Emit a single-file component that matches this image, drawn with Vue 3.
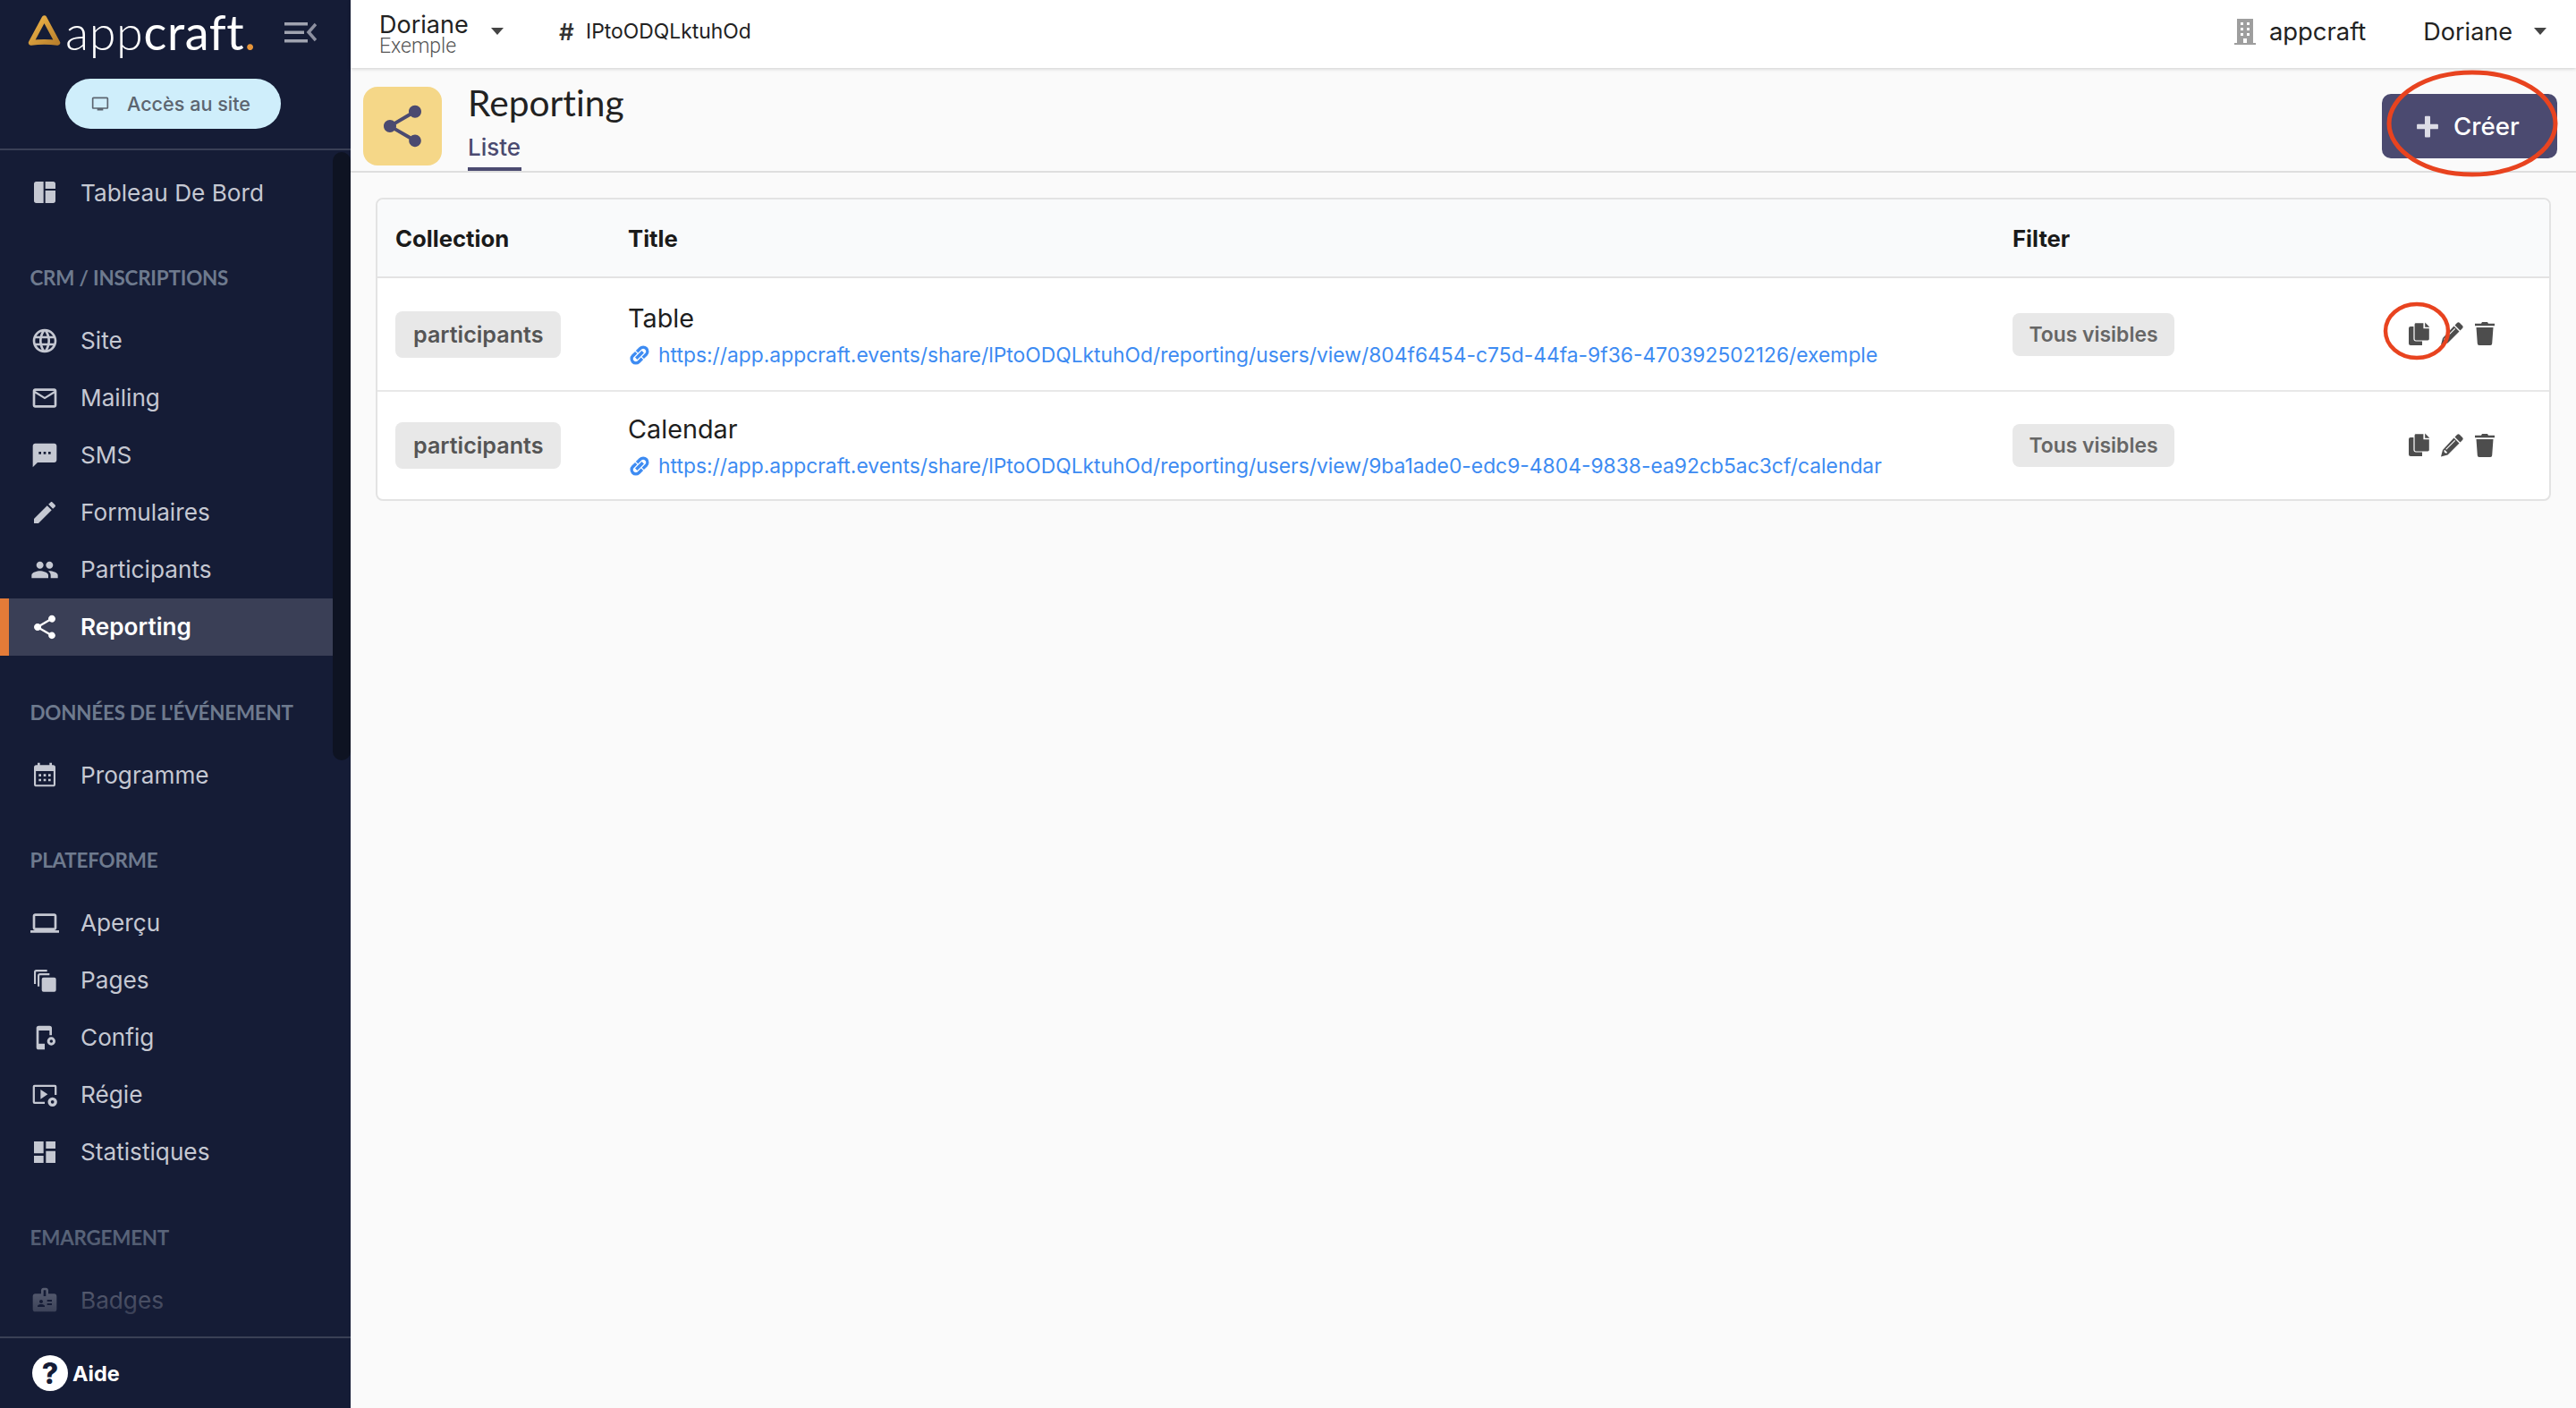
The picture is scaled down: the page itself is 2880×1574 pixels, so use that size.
<script setup>
const I = {
  dash: 'M3 5a2 2 0 0 1 2-2h6v18H5a2 2 0 0 1-2-2zM12.5 3H19a2 2 0 0 1 2 2v4h-8.5zM12.5 10.5H21V19a2 2 0 0 1-2 2h-6.5z',
  globe: 'M11.99 2C6.47 2 2 6.48 2 12s4.47 10 9.99 10C17.52 22 22 17.52 22 12S17.52 2 11.99 2zm6.93 6h-2.95c-.32-1.25-.78-2.45-1.38-3.56 1.84.63 3.37 1.91 4.33 3.56zM12 4.04c.83 1.2 1.48 2.53 1.91 3.96h-3.82c.43-1.43 1.08-2.76 1.91-3.96zM4.26 14C4.1 13.36 4 12.69 4 12s.1-1.36.26-2h3.38c-.08.66-.14 1.32-.14 2 0 .68.06 1.34.14 2H4.26zm.82 2h2.95c.32 1.25.78 2.45 1.38 3.56-1.84-.63-3.37-1.9-4.33-3.56zm2.95-8H5.08c.96-1.66 2.49-2.93 4.33-3.56C8.81 5.55 8.35 6.75 8.03 8zM12 19.96c-.83-1.2-1.48-2.53-1.91-3.96h3.82c-.43 1.43-1.08 2.76-1.91 3.96zM14.34 14H9.66c-.09-.66-.16-1.32-.16-2 0-.68.07-1.35.16-2h4.68c.09.65.16 1.32.16 2 0 .68-.07 1.34-.16 2zm.25 5.56c.6-1.11 1.06-2.31 1.38-3.56h2.95c-.96 1.65-2.49 2.93-4.33 3.56zM16.36 14c.08-.66.14-1.32.14-2 0-.68-.06-1.34-.14-2h3.38c.16.64.26 1.31.26 2s-.1 1.36-.26 2h-3.38z',
  mail: 'M20 4H4c-1.1 0-1.99.9-1.99 2L2 18c0 1.1.9 2 2 2h16c1.1 0 2-.9 2-2V6c0-1.1-.9-2-2-2zm0 14H4V8l8 5 8-5v10zm-8-7L4 6h16l-8 5z',
  sms: 'M20 2H4c-1.1 0-1.99.9-1.99 2L2 22l4-4h14c1.1 0 2-.9 2-2V4c0-1.1-.9-2-2-2zM9 11H7V9h2v2zm4 0h-2V9h2v2zm4 0h-2V9h2v2z',
  edit: 'M3 17.25V21h3.75L17.81 9.94l-3.75-3.75L3 17.25zM20.71 7.04c.39-.39.39-1.02 0-1.41l-2.34-2.34c-.39-.39-1.02-.39-1.41 0l-1.83 1.83 3.75 3.75 1.83-1.83z',
  people: 'M16 11c1.66 0 2.99-1.34 2.99-3S17.66 5 16 5c-1.66 0-3 1.34-3 3s1.34 3 3 3zm-8 0c1.66 0 2.99-1.34 2.99-3S9.66 5 8 5C6.34 5 5 6.34 5 8s1.34 3 3 3zm0 2c-2.33 0-7 1.17-7 3.5V19h14v-2.5c0-2.33-4.67-3.5-7-3.5zm8 0c-.29 0-.62.02-.97.05 1.16.84 1.97 1.97 1.97 3.45V19h6v-2.5c0-2.33-4.67-3.5-7-3.5z',
  share: 'M18 16.08c-.76 0-1.44.3-1.96.77L8.91 12.7c.05-.23.09-.46.09-.7s-.04-.47-.09-.7l7.05-4.11c.54.5 1.25.81 2.04.81 1.66 0 3-1.34 3-3s-1.34-3-3-3-3 1.34-3 3c0 .24.04.47.09.7L8.04 9.81C7.5 9.31 6.79 9 6 9c-1.66 0-3 1.34-3 3s1.34 3 3 3c.79 0 1.5-.31 2.04-.81l7.12 4.16c-.05.21-.08.43-.08.65 0 1.61 1.31 2.92 2.92 2.92 1.61 0 2.92-1.31 2.92-2.92s-1.31-2.92-2.92-2.92z',
  cal: 'M19 4h-1V2h-2v2H8V2H6v2H5a2 2 0 0 0-2 2v14a2 2 0 0 0 2 2h14a2 2 0 0 0 2-2V6a2 2 0 0 0-2-2zm.4 16.4H4.6V9h14.8zM7 11.5h2v2H7zm4 0h2v2h-2zm4 0h2v2h-2zM7 15.5h2v2H7zm4 0h2v2h-2zm4 0h2v2h-2z',
  laptop: 'M20 18c1.1 0 1.99-.9 1.99-2L22 6c0-1.1-.9-2-2-2H4c-1.1 0-2 .9-2 2v10c0 1.1.9 2 2 2H0v2h24v-2h-4zM4 6h16v10H4V6z',
  pages: 'M3 5a2 2 0 0 1 2-2h9v1.6H5a.4.4 0 0 0-.4.4v10H3zM6 8a2 2 0 0 1 2-2h8v1.6H8a.4.4 0 0 0-.4.4v9H6zM11 9.5h9a1.5 1.5 0 0 1 1.5 1.5v9a1.5 1.5 0 0 1-1.5 1.5h-9a1.5 1.5 0 0 1-1.5-1.5v-9A1.5 1.5 0 0 1 11 9.5z',
  config: 'M7 2h9a2 2 0 0 1 2 2v6h-2V6H7v11h5v5H7a2 2 0 0 1-2-2V4a2 2 0 0 1 2-2zM17.5 11.5a3.5 3.5 0 1 1 0 7 3.5 3.5 0 0 1 0-7zm0 2.2a1.3 1.3 0 1 0 0 2.6 1.3 1.3 0 0 0 0-2.6z',
  regie: 'M3.5 3.5h17A1.5 1.5 0 0 1 22 5v7h-1.7V5.2H3.7v12.6H12v1.7H3.5A1.5 1.5 0 0 1 2 18V5a1.5 1.5 0 0 1 1.5-1.5zM8.5 7.5l6 4-6 4zM18.5 14a3.9 3.9 0 1 1 0 7.800 3.9 3.9 0 0 1 0-7.800zm0 2.500a1.400 1.400 0 1 0 0 2.800 1.400 1.400 0 0 0 0-2.800z',
  stats: 'M3 13h8V3H3v10zm0 8h8v-6H3v6zm10 0h8V11h-8v10zm0-18v6h8V3h-8z',
  badge: 'M20 7h-5V4c0-1.1-.9-2-2-2h-2c-1.1 0-2 .9-2 2v3H4c-1.1 0-2 .9-2 2v11c0 1.1.9 2 2 2h16c1.1 0 2-.9 2-2V9c0-1.1-.9-2-2-2zM9 12c.83 0 1.5.67 1.5 1.5S9.83 15 9 15s-1.5-.67-1.5-1.5S8.17 12 9 12zm3 6H6v-.75c0-1 2-1.5 3-1.5s3 .5 3 1.5V18zm1-9h-2V4h2v5zm5 7.500h-4V15h4v1.500zm0-3h-4V12h4v1.500z',
  monitor: 'M21 3H3c-1.1 0-2 .9-2 2v12c0 1.1.9 2 2 2h5v2h8v-2h5c1.1 0 2-.9 2-2V5c0-1.1-.9-2-2-2zm0 14H3V5h18v12z',
  link: 'M3.9 12c0-1.71 1.39-3.1 3.1-3.1h4V7H7c-2.76 0-5 2.24-5 5s2.24 5 5 5h4v-1.900H7c-1.710 0-3.100-1.390-3.100-3.100zM8 13h8v-2H8v2zm9-6h-4v1.900h4c1.710 0 3.100 1.390 3.100 3.100s-1.390 3.100-3.100 3.100h-4V17h4c2.760 0 5-2.240 5-5s-2.240-5-5-5z'
}
const nav = [
  { items: [{ t: 'Tableau De Bord', i: I.dash }] },
  { head: 'CRM / INSCRIPTIONS', items: [
    { t: 'Site', i: I.globe }, { t: 'Mailing', i: I.mail }, { t: 'SMS', i: I.sms },
    { t: 'Formulaires', i: I.edit }, { t: 'Participants', i: I.people }, { t: 'Reporting', i: I.share, active: true }
  ] },
  { head: "DONNÉES DE L'ÉVÉNEMENT", items: [{ t: 'Programme', i: I.cal }] },
  { head: 'PLATEFORME', items: [
    { t: 'Aperçu', i: I.laptop }, { t: 'Pages', i: I.pages }, { t: 'Config', i: I.config },
    { t: 'Régie', i: I.regie }, { t: 'Statistiques', i: I.stats }
  ] },
  { head: 'EMARGEMENT', items: [{ t: 'Badges', i: I.badge }] }
]
const rows = [
  { title: 'Table', url: 'https://app.appcraft.events/share/lPtoODQLktuhOd/reporting/users/view/804f6454-c75d-44fa-9f36-470392502126/exemple' },
  { title: 'Calendar', url: 'https://app.appcraft.events/share/lPtoODQLktuhOd/reporting/users/view/9ba1ade0-edc9-4804-9838-ea92cb5ac3cf/calendar' }
]
</script>

<template>
  <div class="app">
    <aside class="side">
      <div class="brand">
        <svg class="tri" viewBox="0 0 36 36" width="37" height="37">
          <defs><linearGradient id="gold" x1="0" y1="0" x2="1" y2="1"><stop offset="0" stop-color="#f0b64a"/><stop offset="1" stop-color="#b9802c"/></linearGradient></defs>
          <path d="M18 3 L32.500 30 Q18 28 3.500 30 Z" fill="none" stroke="url(#gold)" stroke-width="5.500" stroke-linejoin="round"/>
        </svg>
        <span class="logo"><span class="lt">app</span>craft<span class="dot">.</span></span>
        <svg class="toggle" viewBox="0 0 36 24" width="36" height="24">
          <path d="M0 1h26v3.500H0zM0 10.500h22V14H0zM0 20h26v3.500H0z" fill="#a0a3b0"/>
          <path d="M35 3L27 12l8 9" fill="none" stroke="#8d90a0" stroke-width="3.500"/>
        </svg>
      </div>
      <div class="access-wrap">
        <button class="access">
          <svg viewBox="0 0 24 24" width="20" height="20"><path :d="I.monitor" fill="#5c6570" fill-rule="evenodd"/></svg>
          <span>Accès au site</span>
        </button>
      </div>
      <nav class="nav">
        <section v-for="(g, n) in nav" :key="n">
          <h4 v-if="g.head" class="head">{{ g.head }}</h4>
          <a v-for="it in g.items" :key="it.t" class="item" :class="{ active: it.active }">
            <svg viewBox="0 0 24 24" width="32" height="32"><path :d="it.i" fill="currentColor" fill-rule="evenodd"/></svg>
            <span>{{ it.t }}</span>
          </a>
        </section>
        <div class="thumb"></div>
        <div class="fade"></div>
      </nav>
      <div class="aide">
        <span class="q">?</span>
        <span class="aide-t">Aide</span>
      </div>
    </aside>

    <main class="main">
      <header class="top">
        <div class="ev">
          <div class="ev-name">Doriane</div>
          <div class="ev-sub">Exemple</div>
        </div>
        <i class="caret c1"></i>
        <span class="hash">#</span>
        <span class="code">IPtoODQLktuhOd</span>
        <span class="grow"></span>
        <svg class="bld" viewBox="0 0 24 29" width="24" height="29">
          <path fill="#9e9e9e" fill-rule="evenodd" d="M3 0h18v27h3v2H0v-2h3zM7 4v3h3V4zm7 0v3h3V4zM7 10v3h3v-3zm7 0v3h3v-3zM7 16v3h3v-3zm7 0v3h3v-3zM10 22v5h4v-5z"/>
        </svg>
        <span class="org">appcraft</span>
        <span class="user">Doriane</span>
        <i class="caret c2"></i>
      </header>

      <div class="pagehead">
        <div class="pic">
          <svg viewBox="0 0 24 24" width="56" height="56"><path :d="I.share" fill="#4b4a70"/></svg>
        </div>
        <div class="titles">
          <h1>Reporting</h1>
          <div class="tab">Liste</div>
        </div>
        <span class="grow"></span>
        <button class="create">
          <svg viewBox="0 0 24 24" width="26" height="26"><path d="M10 1.500h4a.8.8 0 0 1 .8.8v7.700h7.400a.8.8 0 0 1 .8.8v3.400a.8.8 0 0 1-.8.8h-7.400v7.700a.8.8 0 0 1-.8.8h-4a.8.8 0 0 1-.8-.8V15H1.800a.8.8 0 0 1-.8-.8v-3.400a.8.8 0 0 1 .8-.8h7.400V2.300a.8.8 0 0 1 .8-.8z" fill="#dcdce6"/></svg>
          <span>Créer</span>
        </button>
        <svg class="ring ring-a" viewBox="0 0 200 126" width="200" height="126"><ellipse cx="100" cy="63" rx="93" ry="57" fill="none" stroke="#e8431f" stroke-width="5"/></svg>
      </div>

      <div class="card">
        <div class="row thead">
          <div class="c1c">Collection</div>
          <div class="c2c">Title</div>
          <div class="c3c">Filter</div>
        </div>
        <div v-for="(r, n) in rows" :key="r.title" class="row tr">
          <div class="c1c"><span class="pill">participants</span></div>
          <div class="c2c body">
            <div class="rt">{{ r.title }}</div>
            <div class="url">
              <svg viewBox="0 0 24 24" width="28" height="28"><path :d="I.link" fill="#3d8bf2" stroke="#3d8bf2" stroke-width="1" transform="rotate(-45 12 12)"/></svg>
              <span>{{ r.url }}</span>
            </div>
          </div>
          <div class="c3c"><span class="pill2">Tous visibles</span></div>
          <div class="acts">
            <svg viewBox="0 0 24 27" width="24" height="27"><path fill="#4d4d4d" d="M2 5h13v21H2a2 2 0 0 1-2-2V7a2 2 0 0 1 2-2z"/><path fill="#4d4d4d" stroke="#fff" stroke-width="1.200" d="M8 .6h9v6h6.400V19a2 2 0 0 1-2 2H8a2 2 0 0 1-2-2V2.600a2 2 0 0 1 2-2z"/><path fill="#4d4d4d" d="M18.200 .6l5.200 5.200h-5.200z"/></svg>
            <svg viewBox="0 0 26 26" width="26" height="26"><path fill="#4d4d4d" d="M19 1a2.200 2.200 0 0 1 3 0l3 3a2.200 2.200 0 0 1 0 3l-2.500 2.500-6-6zM15.500 4.500l6 6L8.500 23.500l-7.500 2 2-7.500z"/><path fill="#fff" d="M4.300 18.800l.8 2.100 2.100.8.900-1-2.800-2.800zM6.300 16.900l10-10 .8.800-10 10z"/></svg>
            <svg class="trash" viewBox="0 0 22 26" width="22" height="26"><path fill="#4d4d4d" d="M8 0h6l1 1.700h7v2.600H0V1.700h7zM1.500 6h19l-1.300 18a2 2 0 0 1-2 2H4.800a2 2 0 0 1-2-2z"/></svg>
          </div>
          <svg v-if="n === 0" class="ring ring-b" viewBox="0 0 76 66" width="76" height="66"><ellipse cx="38" cy="33" rx="35" ry="30" fill="none" stroke="#e8431f" stroke-width="4.500"/></svg>
        </div>
      </div>
    </main>
  </div>
</template>

<style>
html, body { margin: 0; background: #fafafa; }
</style>

<style scoped>
.app { display: flex; width: 2880px; height: 1574px; overflow: hidden; font-family: Inter, "Liberation Sans", sans-serif; background: #fafafa; }
.grow { flex: 1; }

.side { width: 392px; flex: none; background: #151c36; display: flex; flex-direction: column; }
.brand { height: 76px; display: flex; align-items: center; padding-left: 31px; position: relative; }
.tri { flex: none; margin-top: -6px; }
.logo { font-family: Lato, sans-serif; font-size: 54px; font-weight: 400; color: #fff; margin-left: 5px; line-height: 1; margin-top: -4px; letter-spacing: .6px; }
.lt { font-weight: 300; }
.dot { color: #e8963a; }
.toggle { margin-left: 31px; margin-top: -4px; flex: none; }
.access-wrap { height: 92px; border-bottom: 2px solid #3a4056; display: flex; padding-left: 73px; box-sizing: border-box; padding-top: 12px; }
.access { width: 241px; height: 56px; border: 0; border-radius: 28px; background: #cfeefb; color: #5c6570; display: flex; align-items: center; justify-content: flex-start; padding: 0 0 0 29px; gap: 20px; font: 500 21.600px Inter, sans-serif; }

.nav { flex: 1; position: relative; overflow: hidden; padding-top: 15px; min-height: 0; }
.head { margin: 0; padding: 52px 0 25.500px 33.500px; font: 700 22.400px/24px Lato, sans-serif; color: #6e7a8e; white-space: nowrap; letter-spacing: -.2px; }
.item { display: flex; align-items: center; width: 372px; height: 64px; box-sizing: border-box; padding-left: 34px; gap: 24px; color: #c5c8d2; font-size: 26.200px; }
.item.active { background: #3a3f56; border-left: 10px solid #e47b38; padding-left: 24px; color: #fff; font-weight: 600; }
.thumb { position: absolute; right: 0; top: 2px; width: 20px; height: 680px; background: #0e1322; border-radius: 10px; }
.fade { position: absolute; left: 0; right: 0; bottom: 0; height: 154px; background: linear-gradient(to bottom, rgba(21,28,54,0), rgba(21,28,54,.95)); pointer-events: none; }
.aide { height: 80px; border-top: 2px solid #3a4056; box-sizing: border-box; display: flex; align-items: center; padding-left: 36px; gap: 5px; color: #fff; }
.q { width: 40px; height: 40px; border-radius: 50%; background: #fff; color: #151c36; display: flex; align-items: center; justify-content: center; font: 800 32px Inter, sans-serif; }
.aide-t { font-weight: 700; font-size: 23.500px; }

.main { flex: 1; min-width: 0; display: flex; flex-direction: column; position: relative; }
.top { height: 76px; box-sizing: border-box; padding-bottom: 6px; background: #fff; box-shadow: 0 1px 4px rgba(0,0,0,.18); display: flex; align-items: center; padding-left: 32px; flex: none; position: relative; color: #222; }
.ev { width: 124px; margin-top: 5px; }
.ev-name { font-size: 27px; line-height: 28px; }
.ev-sub { font: 300 23px/20px Roboto, sans-serif; color: #555; }
.caret { width: 0; height: 0; border-left: 7px solid transparent; border-right: 7px solid transparent; border-top: 8px solid #444; flex: none; }
.c1 { margin-left: 1px; }
.hash { font-size: 26px; font-weight: 600; margin-left: 62px; width: 30px; color: #333; }
.code { font-size: 22.900px; }
.bld { flex: none; }
.org { font-size: 27.400px; margin-left: 15px; }
.user { font-size: 27px; margin-left: 64px; }
.c2 { margin-left: 24px; margin-right: 33px; }

.pagehead { flex: none; height: 117px; box-sizing: border-box; border-bottom: 2px solid #dedede; display: flex; padding-left: 14px; position: relative; }
.pic { width: 88px; height: 88px; margin-top: 21px; border-radius: 16px; background: #f5d788; display: flex; align-items: center; justify-content: center; flex: none; }
.titles { margin-left: 29px; display: flex; flex-direction: column; align-items: flex-start; }
h1 { margin: 14px 0 0; font: 400 40.700px/50px Lato, sans-serif; color: #222; font-variant-ligatures: none; }
.tab { margin-top: 15px; color: #4b4a70; font-size: 26px; font-weight: 500; line-height: 20px; height: 38px; box-sizing: border-box; width: 60px; border-bottom: 4px solid #4b4a70; }
.create { margin: 29px 21px 0 0; width: 196px; height: 72px; border: 0; border-radius: 10px; background: #4b4a70; color: #fff; display: flex; align-items: center; justify-content: flex-start; padding: 0 0 0 38px; gap: 16px; font: 500 27.700px Inter, sans-serif; flex: none; }
.ring { position: absolute; pointer-events: none; }
.ring-a { right: 16px; top: -1px; }

.card { margin: 28px 28px 0 28px; background: #fff; border: 2px solid #e3e3e3; border-radius: 8px; box-sizing: border-box; }
.row { display: flex; align-items: center; position: relative; box-sizing: border-box; }
.thead { height: 88px; background: #f9fafb; border-bottom: 2px solid #e3e3e3; border-radius: 8px 8px 0 0; font-size: 25.700px; font-weight: 700; color: #1a1a1a; }
.tr { height: 125px; }
.tr + .tr { border-top: 2px solid #e8e8e8; height: 122px; }
.c1c { width: 280px; padding-left: 20px; box-sizing: border-box; flex: none; }
.c2c { width: 1548px; flex: none; }
.body { padding-top: 2px; }
.c3c { width: 443px; flex: none; }
.pill { display: inline-flex; align-items: center; height: 52px; padding: 0 20px; border-radius: 8px; background: #e8e8e8; color: #555; font-weight: 600; font-size: 25.100px; }
.pill2 { display: inline-flex; align-items: center; height: 48px; padding: 0 18.500px; border-radius: 8px; background: #e8e8e8; color: #666; font-weight: 600; font-size: 22.900px; }
.rt { font-size: 28.800px; color: #1e1e1e; line-height: 36px; }
.url { display: flex; align-items: center; gap: 7px; color: #3d8bf2; font-size: 22.850px; line-height: 30px; margin-top: 8px; white-space: nowrap; margin-left: -1px; }
.url svg { flex: none; }
.acts { display: flex; align-items: center; gap: 11px; flex: none; margin-top: -1px; }
.trash { margin-left: 2px; }
.ring-b { left: 2242px; top: 26px; }
</style>
